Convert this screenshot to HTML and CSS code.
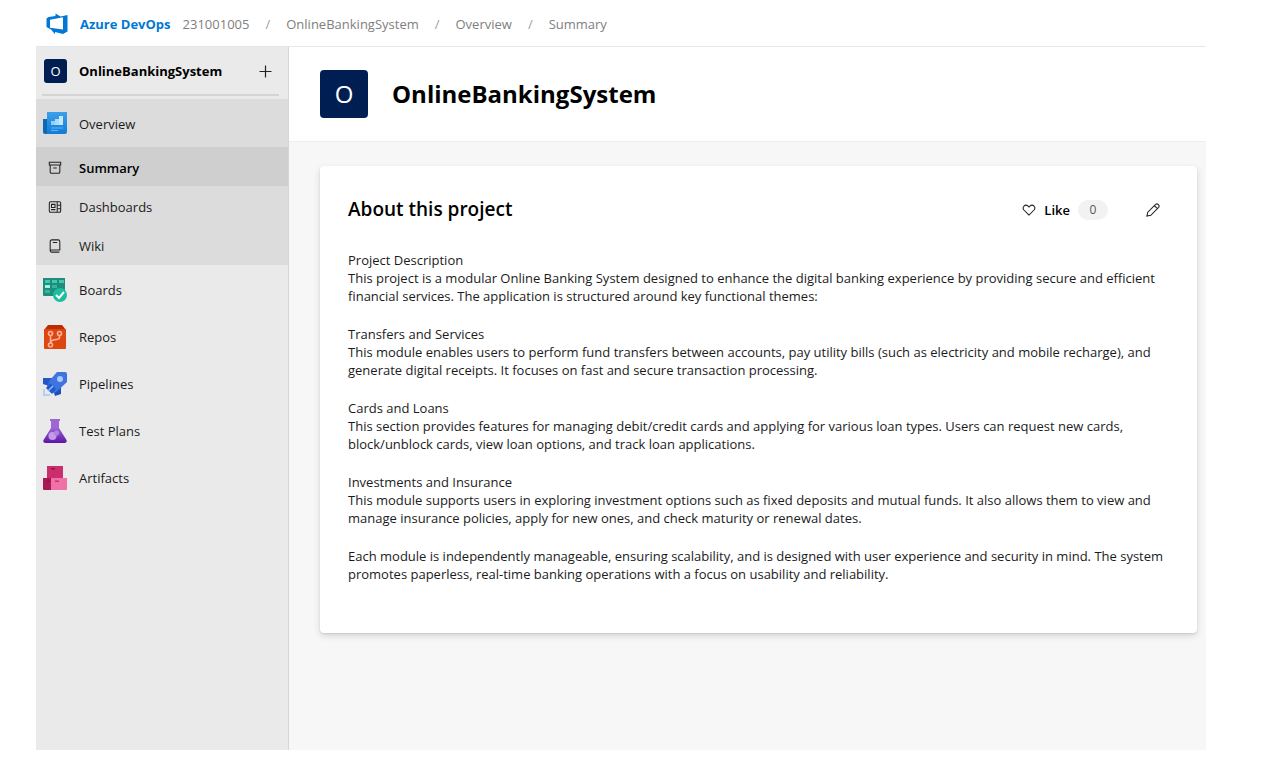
FILE: index.html
```html
<!DOCTYPE html>
<html lang="en">
<head>
<meta charset="utf-8">
<meta name="viewport" content="width=device-width, initial-scale=1">
<title>OnlineBankingSystem - Summary</title>
<link rel="stylesheet" href="styles.css">
</head>
<body>
<div class="app">
  <header class="topbar">
    <a class="brand" href="#">
      <svg class="brand-logo" viewBox="0 0 22 22" aria-hidden="true"><path fill="#0078d4" fill-rule="evenodd" d="M.5 5.500 2.500 4l7-1V.5l5 3L21.500 2v16.500L17 21l-8-2v2.300L5 16.500.5 14zM4 6.800v8L17 16.500V4.300z"/></svg>
      <span>Azure DevOps</span>
    </a>
    <nav aria-label="Breadcrumb">
      <ol class="crumbs">
        <li><a href="#">231001005</a></li>
        <li><a href="#">OnlineBankingSystem</a></li>
        <li><a href="#">Overview</a></li>
        <li><a href="#">Summary</a></li>
      </ol>
    </nav>
  </header>
  <div class="workspace">
    <aside class="sidebar">
      <div class="project">
        <span class="avatar avatar-small">O</span>
        <span class="project-name">OnlineBankingSystem</span>
        <button class="icon-button" type="button" aria-label="Add">
          <svg class="icon" viewBox="0 0 14 14"><path d="M7.500 1.500v12M1.500 7.500h12"/></svg>
        </button>
      </div>
      <nav class="menu" aria-label="Project">
        <div class="menu-group">
          <a class="menu-item" href="#">
            <svg class="hub-icon" viewBox="0 0 24 24" aria-hidden="true"><defs><linearGradient id="ov" x1="0" y1="0" x2="0" y2="1"><stop stop-color="#3c9fe9"/><stop offset="1" stop-color="#117cd6"/></linearGradient></defs><path fill="#0f68b4" d="M0 7h4v15H2a2 2 0 0 1-2-2z"/><path fill="url(#ov)" d="M4 0h20v20a2 2 0 0 1-2 2H2c1 0 2-1 2-2z"/><path fill="#8fd0fb" d="M8 9h4v4H8z"/><path fill="#a9dcff" d="M12 7h4v6h-4z"/><path fill="#c3e8ff" d="M16 4h4v9h-4z"/><path fill="#62b5f2" d="M8 15.500h12v1H8zM8 18h7v1H8z"/></svg>
            <span>Overview</span>
          </a>
          <a class="menu-item sub current" href="#" aria-current="page">
            <svg class="icon" viewBox="0 0 16 16" aria-hidden="true"><path d="M1.500 1.500h13v3h-13zM2.500 4.500v8q0 1.500 1.500 1.500h8q1.500 0 1.500-1.500v-8M6 8h4"/></svg>
            <span>Summary</span>
          </a>
          <a class="menu-item sub" href="#">
            <svg class="icon" viewBox="0 0 16 16" aria-hidden="true"><path d="M3 2h10q1.500 0 1.500 1.500v9q0 1.500-1.500 1.500H3q-1.500 0-1.500-1.500v-9Q1.500 2 3 2zM10.500 2v12M10.500 6h4M10.500 10h4M4 5h4v3.500H4zM3.500 11h5"/></svg>
            <span>Dashboards</span>
          </a>
          <a class="menu-item sub" href="#">
            <svg class="icon" viewBox="0 0 16 16" aria-hidden="true"><path d="M4.500 1h7q2 0 2 2v9.500h-9q-2 0-2 1V3q0-2 2-2zM2.500 13q0 2 2 2h8.500M5.500 4h5"/></svg>
            <span>Wiki</span>
          </a>
        </div>
        <a class="menu-item" href="#">
          <svg class="hub-icon" viewBox="0 0 24 24" aria-hidden="true"><path fill="#1e8d7c" d="M0 0h22v18H1a1 1 0 0 1-1-1z"/><path fill="#45c7ad" d="M2 2h5v3H2zM9 2h5v3H9zM16 2h5v3h-5z"/><path fill="#a0f5dc" d="M2 7h5v3H2z"/><path fill="#38b49c" d="M9 7h5v3H9zM2 12h5v3H2z"/><circle cx="17" cy="17" r="7" fill="#1bbf9f"/><path d="m13 17 3 3 5-6" fill="none" stroke="#fff" stroke-width="2"/></svg>
          <span>Boards</span>
        </a>
        <a class="menu-item" href="#">
          <svg class="hub-icon" viewBox="0 0 24 24" aria-hidden="true"><path fill="#b92d00" d="M5 0h14l4 5H1z"/><path fill="#de4610" d="M1 4h22v19a1 1 0 0 1-1 1H2a1 1 0 0 1-1-1z"/><g fill="none" stroke="#ffb39a" stroke-width="1.600"><circle cx="7.500" cy="8.500" r="2"/><circle cx="16.500" cy="8.500" r="2"/><circle cx="7.500" cy="20" r="2"/><path d="M7.500 10.500V18M16.500 10.500v2q0 1.500-2 1.800l-4 .7q-3 .6-3 3"/></g></svg>
          <span>Repos</span>
        </a>
        <a class="menu-item" href="#">
          <svg class="hub-icon" viewBox="0 0 24 24" aria-hidden="true"><path fill="#2457c5" d="M0 6h10l-4 8-6-2z"/><path fill="#1c50bf" d="M18 13v9l-6 2-2-6z"/><path fill="#3f74e0" d="M14 0h8q2 0 2 2v8l-8 7.500-5 4L4 14l3-6z"/><circle cx="17" cy="7" r="3" fill="#a9c8ff"/><path fill="#1f5bd0" d="m7 11 6 6-4 5-6-6z"/><path fill="none" stroke="#b5cdf8" stroke-width="2" d="M1 17v6h6"/><path fill="none" stroke="#9dbcf5" stroke-width="1.500" d="m5 19 5-5"/></svg>
          <span>Pipelines</span>
        </a>
        <a class="menu-item" href="#">
          <svg class="hub-icon" viewBox="0 0 24 24" aria-hidden="true"><defs><linearGradient id="tp" x1="0" y1="0" x2="0" y2="1"><stop offset=".3" stop-color="#a066d3"/><stop offset="1" stop-color="#5b16a6"/></linearGradient></defs><path fill="url(#tp)" d="M8 2h8v7l7.500 12q1 3-2 3h-19q-3 0-2-3L8 9z"/><path fill="#9c68cc" d="M7 0h10v2H7z"/><circle cx="9.500" cy="17" r="4" fill="#c29be9"/><circle cx="13.500" cy="14" r="2.600" fill="#b084dd"/></svg>
          <span>Test Plans</span>
        </a>
        <a class="menu-item" href="#">
          <svg class="hub-icon" viewBox="0 0 24 24" aria-hidden="true"><path fill="#cb2e6d" d="M4 0h16v12H4z"/><path fill="#a81a51" d="M0 12h8v12H1a1 1 0 0 1-1-1z"/><path fill="#ef71a8" d="M8 12h16v11a1 1 0 0 1-1 1H8z"/><path fill="#96134a" d="M8 2h4v1.500H8zM4 14.500h3V16H4z"/><path fill="#cb2e6d" d="M12 14.500h4V16h-4z"/></svg>
          <span>Artifacts</span>
        </a>
      </nav>
    </aside>
    <main class="content">
      <div class="page-head">
        <span class="avatar avatar-large">O</span>
        <h1>OnlineBankingSystem</h1>
      </div>
      <section class="card" aria-labelledby="about">
        <div class="card-head">
          <h2 id="about">About this project</h2>
          <button class="like" type="button">
            <svg class="icon" viewBox="0 0 16 16" aria-hidden="true"><path d="M8 13.800 2.200 8C-.3 5 3.300 .6 7 3.500l1 1 1-1c3.700-2.900 7.300 1.500 4.800 4.500z"/></svg>
            <span>Like</span>
            <span class="count">0</span>
          </button>
          <button class="icon-button" type="button" aria-label="Edit">
            <svg class="icon" viewBox="0 0 16 16"><path d="M1 15l1-4.500L11 1.600q1.500-1.200 2.800 0l.6.600q1.200 1.400 0 2.800L5.500 14zM9.500 3l3.500 3.500"/></svg>
          </button>
        </div>
        <div class="description">
          <p>Project Description<br>This project is a modular Online Banking System designed to enhance the digital banking experience by providing secure and efficient financial services. The application is structured around key functional themes:</p>
          <p>Transfers and Services<br>This module enables users to perform fund transfers between accounts, pay utility bills (such as electricity and mobile recharge), and generate digital receipts. It focuses on fast and secure transaction processing.</p>
          <p>Cards and Loans<br>This section provides features for managing debit/credit cards and applying for various loan types. Users can request new cards, block/unblock cards, view loan options, and track loan applications.</p>
          <p>Investments and Insurance<br>This module supports users in exploring investment options such as fixed deposits and mutual funds. It also allows them to view and manage insurance policies, apply for new ones, and check maturity or renewal dates.</p>
          <p>Each module is independently manageable, ensuring scalability, and is designed with user experience and security in mind. The system promotes paperless, real-time banking operations with a focus on usability and reliability.</p>
        </div>
      </section>
    </main>
  </div>
</div>
</body>
</html>
```
FILE: styles.css
```css
* { box-sizing: border-box; }

body {
  margin: 0;
  background: #fff;
  color: #1b1b1b;
  font-family: "Open Sans", "Noto Sans", sans-serif;
  font-size: 13px;
  line-height: 18px;
}

a { color: inherit; text-decoration: none; }

button {
  padding: 0;
  border: 0;
  background: none;
  color: inherit;
  font: inherit;
  cursor: pointer;
}

.app {
  display: flex;
  flex-direction: column;
  min-height: 100vh;
  padding: 0 76px 32px 36px;
}

.topbar {
  display: flex;
  align-items: center;
  gap: 12px;
  height: 47px;
  padding: 2px 10px 0;
  border-bottom: 1px solid #e6e6e6;
}

.brand {
  display: flex;
  align-items: center;
  gap: 12px;
  color: #0078d4;
  font-weight: 700;
}

.brand-logo { width: 22px; height: 22px; }

.crumbs {
  display: flex;
  margin: 0;
  padding: 0;
  list-style: none;
  color: #808080;
}

.crumbs li + li::before {
  content: "/";
  padding: 0 16px;
  color: #a0a0a0;
}

.workspace { display: flex; flex: 1; }

.sidebar {
  flex: none;
  width: 253px;
  border-right: 1px solid #d6d6d6;
  background: #eaeaea;
}

.project {
  display: flex;
  align-items: center;
  gap: 12px;
  height: 49px;
  margin: 0 9px 3px 6px;
  padding: 0 7px 0 2px;
  border-bottom: 2px solid #d4d4d4;
  color: #000;
  font-weight: 700;
}

.project-name { flex: 1; }

.avatar {
  display: grid;
  flex: none;
  place-items: center;
  background: #001e51;
  color: #fff;
  font-weight: 400;
}

.avatar-small { width: 23px; height: 24px; border-radius: 3px; }

.avatar-large {
  width: 48px;
  height: 48px;
  border-radius: 4px;
  font-size: 24px;
}

.icon {
  display: block;
  width: 14px;
  height: 14px;
  fill: none;
  stroke: #222;
  stroke-width: 1.200;
}

.menu { display: flex; flex-direction: column; }

.menu-group { padding-bottom: 1px; background: #dcdcdc; }

.menu-item {
  display: grid;
  grid-template-columns: 24px 1fr;
  align-items: center;
  gap: 12px;
  height: 47px;
  padding: 2px 7px 0;
}

.menu-group .menu-item:first-child { height: 48px; }

.menu-item.sub { height: 39px; }

.menu-item.sub .icon { justify-self: center; }

.menu-item.current { background: #cfcfcf; color: #000; font-weight: 600; }

.hub-icon { width: 24px; height: 24px; }

.content { flex: 1; min-width: 0; background: #f7f7f7; }

.page-head {
  display: flex;
  align-items: center;
  gap: 24px;
  height: 95px;
  padding: 0 32px 0 31px;
  border-bottom: 1px solid #eee;
  background: #fff;
}

h1 {
  margin: 0;
  color: #000;
  font-size: 24px;
  font-weight: 700;
  line-height: 32px;
}

.card {
  margin: 24px 9px 24px 31px;
  padding: 28px 28px 30px;
  border-radius: 4px;
  background: #fff;
  box-shadow: 0 3px 7px rgba(0, 0, 0, .13), 0 1px 2px rgba(0, 0, 0, .1);
}

.card-head {
  display: flex;
  align-items: center;
  height: 32px;
  margin-bottom: 25px;
  padding-right: 9px;
}

h2 {
  flex: 1;
  margin: 0;
  padding-bottom: 2px;
  color: #000;
  font-size: 19px;
  font-weight: 600;
  line-height: 28px;
}

.like {
  display: flex;
  align-items: center;
  gap: 8px;
  margin-right: 38px;
  color: #000;
  font-weight: 600;
}

.count {
  min-width: 30px;
  border-radius: 10px;
  background: #f2f2f2;
  color: #555;
  font-size: 12px;
  font-weight: 400;
  line-height: 20px;
}

.description { line-height: 18px; }

.description p { margin: 0 0 20px; }
```
